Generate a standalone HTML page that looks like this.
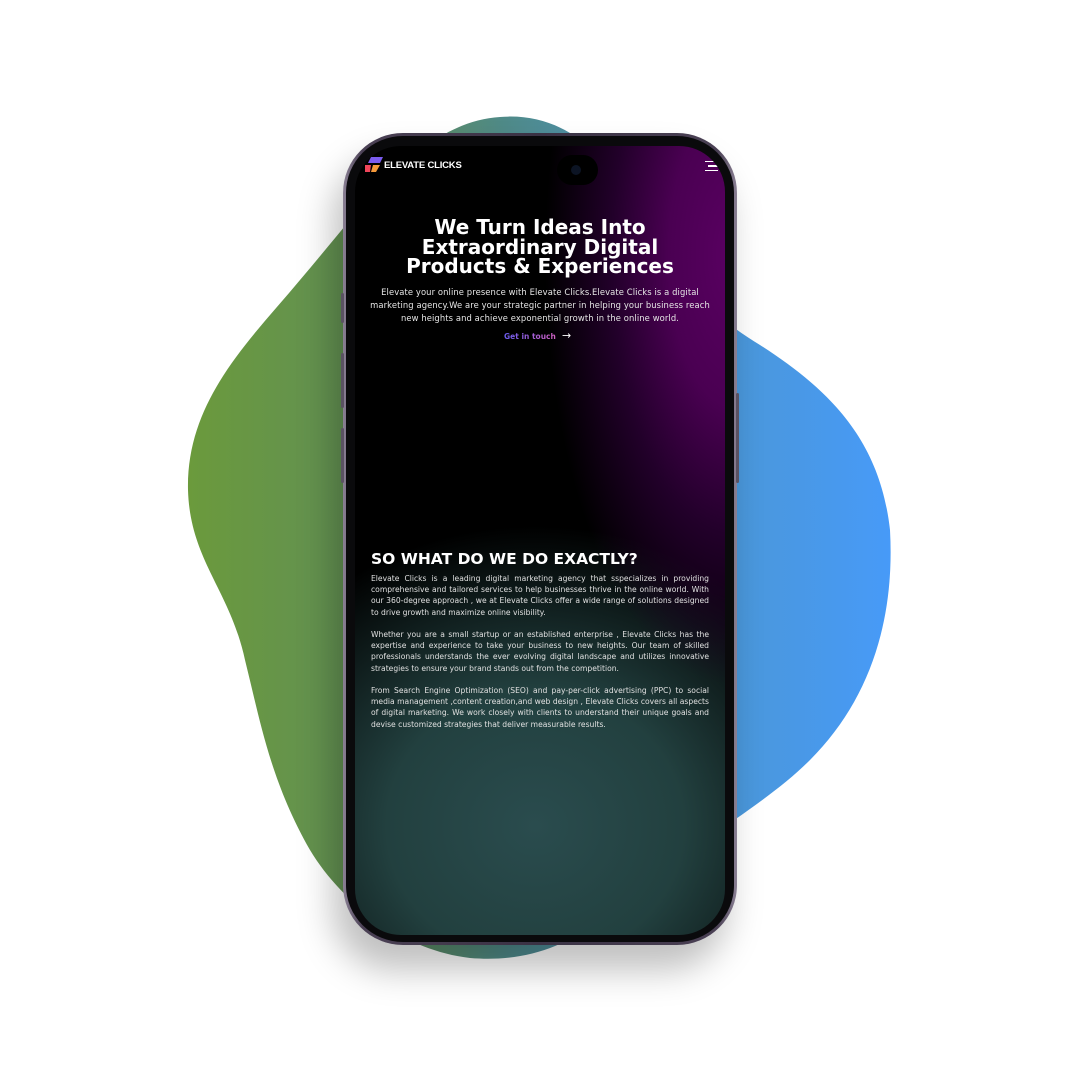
<!DOCTYPE html>
<html><head><meta charset="utf-8"><style>
*{margin:0;padding:0;box-sizing:border-box}
body{width:1080px;height:1080px;background:#fff;position:relative;overflow:hidden;font-family:"DejaVu Sans","Liberation Sans",sans-serif}
.phone{position:absolute;left:343px;top:133px;width:394px;height:812px;border-radius:60px;background:linear-gradient(90deg,#8a8094,#4a4054 5%,#3a3244 50%,#4a4054 95%,#8a8094);box-shadow:-10px 25px 35px rgba(0,0,0,.25)}
.bezel{position:absolute;left:3px;top:3px;right:3px;bottom:3px;border-radius:57px;background:#0a0a0c}
.screen{position:absolute;left:12px;top:13px;width:370px;height:789px;border-radius:46px;overflow:hidden;background:
radial-gradient(ellipse 190px 430px at 380px 110px,#5a0062 0%,#4a0052 35%,#22002a 65%,rgba(0,0,0,0) 100%),
radial-gradient(ellipse 330px 300px at 180px 680px,#2a4c4e 0%,#22403f 45%,rgba(0,0,0,0) 100%),
#000;color:#fff}
.btn{position:absolute;width:3px;background:#5a5262;border-radius:2px}
</style></head><body>
<svg width="1080" height="1080" style="position:absolute;left:0;top:0">
<defs><linearGradient id="g" x1="0" x2="1" y1="0" y2="0">
<stop offset="0" stop-color="#6b9a3c"/><stop offset=".3" stop-color="#5f8d5a"/><stop offset=".45" stop-color="#4f8a88"/><stop offset=".75" stop-color="#4b97d6"/><stop offset="1" stop-color="#479af8"/></linearGradient></defs>
<path d="M500 117 C560 112 610 150 640 220 C680 290 720 320 760 345 C830 390 880 440 890 530 C895 620 870 700 810 760 C760 810 680 850 600 920 C560 950 520 962 470 958 C400 950 340 900 310 850 C270 780 260 720 245 660 C230 590 190 560 188 490 C186 400 250 340 300 280 C360 210 420 122 500 117 Z" fill="url(#g)"/>
</svg>
<div class="phone">
<div class="btn" style="left:-2px;top:160px;height:30px"></div>
<div class="btn" style="left:-2px;top:220px;height:55px"></div>
<div class="btn" style="left:-2px;top:295px;height:55px"></div>
<div class="btn" style="right:-2px;top:260px;height:90px"></div>
<div class="bezel"></div>
<div class="screen">
<div style="position:absolute;left:202px;top:9px;width:41px;height:30px;border-radius:15px;background:#000"></div>
<div style="position:absolute;left:216px;top:19px;width:10px;height:10px;border-radius:50%;background:#0c1424"></div>
<svg style="position:absolute;left:10px;top:11px" width="18" height="16"><path d="M6 0H18L15 6H3Z" fill="#7b5cf0"/><path d="M0 8H6L5 15H0Z" fill="#f0455a"/><path d="M8 8H15L11 15H6Z" fill="#f59a3a"/></svg>
<div style="position:absolute;left:29px;top:14px;font-family:'Liberation Sans',sans-serif;font-size:9.5px;font-weight:bold;letter-spacing:-.2px">ELEVATE CLICKS</div>
<div style="position:absolute;left:350px;top:15px;width:13px;height:10px;border-top:1.5px solid #fff;border-bottom:1.5px solid #fff"></div>
<div style="position:absolute;left:353px;top:19px;width:10px;height:1.5px;background:#fff"></div>
<div style="position:absolute;left:0;top:72px;width:370px;text-align:center;font-size:20px;font-weight:bold;line-height:19.5px">We Turn Ideas Into<br>Extraordinary Digital<br>Products &amp; Experiences</div>
<div style="position:absolute;left:10px;top:140px;width:350px;text-align:center;font-size:8.4px;line-height:12.8px;color:#e6e6e6;letter-spacing:.1px">Elevate your online presence with Elevate Clicks.Elevate Clicks is a digital marketing agency.We are your strategic partner in helping your business reach new heights and achieve exponential growth in the online world.</div>
<div style="position:absolute;left:149px;top:186px;font-size:7.5px;font-weight:bold;background:linear-gradient(90deg,#6a5cf0,#d060c0);-webkit-background-clip:text;color:transparent">Get in touch</div>
<div style="position:absolute;left:207px;top:183px;font-size:11px;color:#fff">→</div>
<div style="position:absolute;left:16px;top:404px;font-size:15.5px;font-weight:bold">SO WHAT DO WE DO EXACTLY?</div>
<div style="position:absolute;left:16px;top:427px;width:338px;font-size:7.6px;line-height:11.2px;text-align:justify;color:#e0e0e0">
<p>Elevate Clicks is a leading digital marketing agency that sspecializes in providing comprehensive and tailored services to help businesses thrive in the online world. With our 360-degree approach , we at Elevate Clicks offer a wide range of solutions designed to drive growth and maximize online visibility.</p><br>
<p>Whether you are a small startup or an established enterprise , Elevate Clicks has the expertise and experience to take your business to new heights. Our team of skilled professionals understands the ever evolving digital landscape and utilizes innovative strategies to ensure your brand stands out from the competition.</p><br>
<p>From Search Engine Optimization (SEO) and pay-per-click advertising (PPC) to social media management ,content creation,and web design , Elevate Clicks covers all aspects of digital marketing. We work closely with clients to understand their unique goals and devise customized strategies that deliver measurable results.</p>
</div>
</div></div>
</body></html>
